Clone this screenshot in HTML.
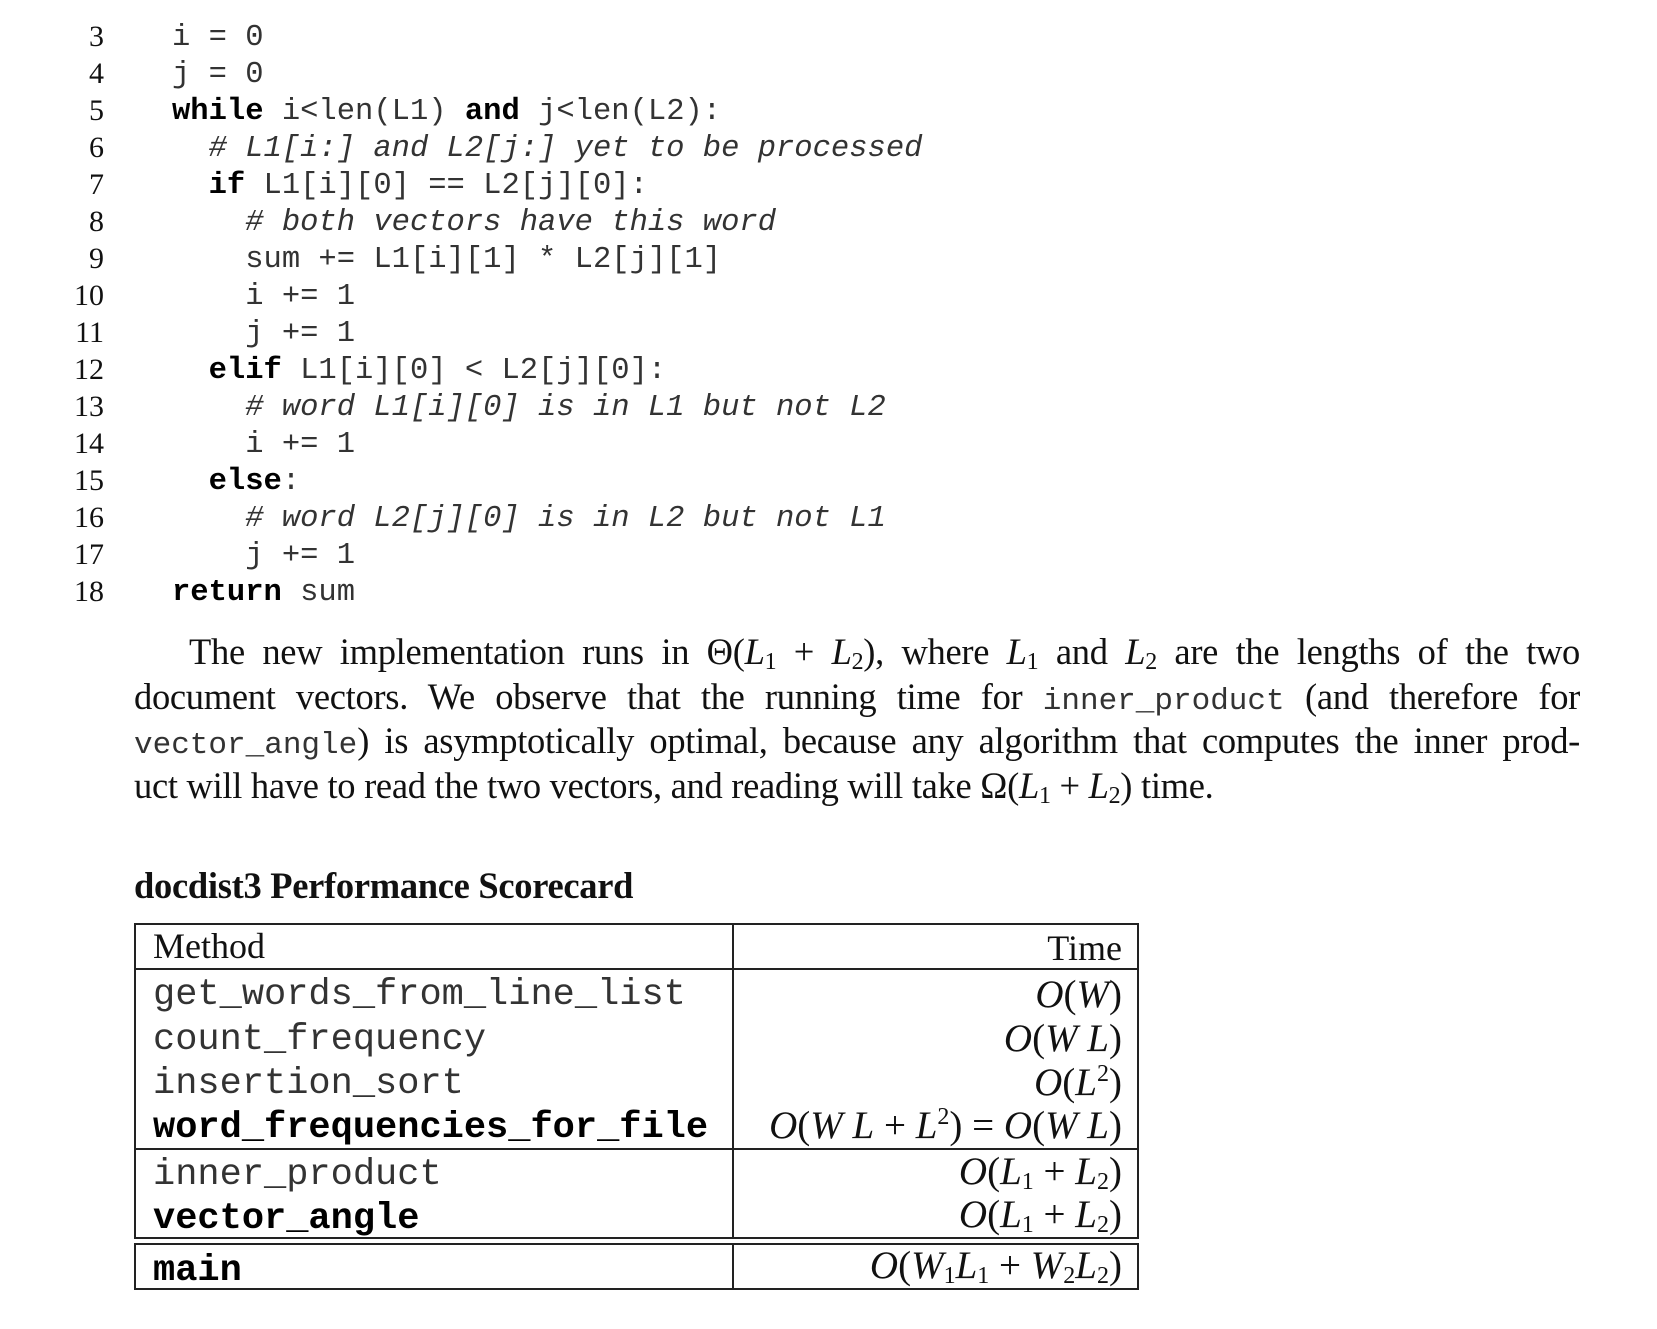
<!DOCTYPE html>
<html><head><meta charset="utf-8"><style>
body{margin:0;width:1657px;height:1329px;background:#fff;position:relative;overflow:hidden;color:#111}
.ln{position:absolute;left:40px;width:64px;text-align:right;font:30px "Liberation Serif",serif}
.cd{position:absolute;left:172px;font:30.5px "Liberation Mono",monospace;white-space:pre;color:#333}
.cd b{font-weight:bold;color:#000}.cd i{font-style:italic}
.p{position:absolute;left:134px;width:1446px;font:36.5px "Liberation Serif",serif;white-space:nowrap;letter-spacing:-0.3px}
.j{text-align:justify;text-align-last:justify;white-space:normal}
.m{font-family:"Liberation Mono",monospace;font-size:31px;color:#333;letter-spacing:0}
i{font-style:italic}
sub{font-size:24px;vertical-align:-5px;line-height:0}
sup{font-size:24px;vertical-align:14px;line-height:0}
.hl{position:absolute;left:134px;width:1005px;height:2px;background:#222}
.vl{position:absolute;left:732px;width:2px;background:#222}
.c{position:absolute;left:153px;font:37px "Liberation Mono",monospace;white-space:pre;line-height:44px;color:#333}
.c.b{font-weight:bold;color:#000}
.t{position:absolute;right:535px;text-align:right;font:39px "Liberation Serif",serif;white-space:nowrap;line-height:40px}
</style></head><body>
<div class="ln" style="top:20px">3</div><div class="cd" style="top:21px">i = 0</div>
<div class="ln" style="top:57px">4</div><div class="cd" style="top:58px">j = 0</div>
<div class="ln" style="top:94px">5</div><div class="cd" style="top:95px"><b>while</b> i&lt;len(L1) <b>and</b> j&lt;len(L2):</div>
<div class="ln" style="top:131px">6</div><div class="cd" style="top:132px"><i>  # L1[i:] and L2[j:] yet to be processed</i></div>
<div class="ln" style="top:168px">7</div><div class="cd" style="top:169px">  <b>if</b> L1[i][0] == L2[j][0]:</div>
<div class="ln" style="top:205px">8</div><div class="cd" style="top:206px"><i>    # both vectors have this word</i></div>
<div class="ln" style="top:242px">9</div><div class="cd" style="top:243px">    sum += L1[i][1] * L2[j][1]</div>
<div class="ln" style="top:279px">10</div><div class="cd" style="top:280px">    i += 1</div>
<div class="ln" style="top:316px">11</div><div class="cd" style="top:317px">    j += 1</div>
<div class="ln" style="top:353px">12</div><div class="cd" style="top:354px">  <b>elif</b> L1[i][0] &lt; L2[j][0]:</div>
<div class="ln" style="top:390px">13</div><div class="cd" style="top:391px"><i>    # word L1[i][0] is in L1 but not L2</i></div>
<div class="ln" style="top:427px">14</div><div class="cd" style="top:428px">    i += 1</div>
<div class="ln" style="top:464px">15</div><div class="cd" style="top:465px">  <b>else</b>:</div>
<div class="ln" style="top:501px">16</div><div class="cd" style="top:502px"><i>    # word L2[j][0] is in L2 but not L1</i></div>
<div class="ln" style="top:538px">17</div><div class="cd" style="top:539px">    j += 1</div>
<div class="ln" style="top:575px">18</div><div class="cd" style="top:576px"><b>return</b> sum</div>

<div class="p j" style="top:630px;left:189px;width:1391px">The new implementation runs in Θ(<i>L</i><sub>1</sub> + <i>L</i><sub>2</sub>), where <i>L</i><sub>1</sub> and <i>L</i><sub>2</sub> are the lengths of the two</div>
<div class="p j" style="top:675px">document vectors. We observe that the running time for <span class="m">inner_product</span> (and therefore for</div>
<div class="p j" style="top:719px"><span class="m">vector_angle</span>) is asymptotically optimal, because any algorithm that computes the inner prod-</div>
<div class="p" style="top:764px">uct will have to read the two vectors, and reading will take Ω(<i>L</i><sub>1</sub> + <i>L</i><sub>2</sub>) time.</div>

<div class="p" style="top:864px;font-weight:bold">docdist3 Performance Scorecard</div>

<div class="hl" style="top:923px"></div>
<div class="hl" style="top:968px"></div>
<div class="hl" style="top:1148px"></div>
<div class="hl" style="top:1237px"></div>
<div class="hl" style="top:1243px"></div>
<div class="hl" style="top:1288px"></div>
<div style="position:absolute;left:134px;top:923px;width:2px;height:316px;background:#222"></div>
<div style="position:absolute;left:1137px;top:923px;width:2px;height:316px;background:#222"></div>
<div style="position:absolute;left:134px;top:1243px;width:2px;height:47px;background:#222"></div>
<div style="position:absolute;left:1137px;top:1243px;width:2px;height:47px;background:#222"></div>
<div class="vl" style="top:923px;height:316px"></div>
<div class="vl" style="top:1243px;height:47px"></div>

<div class="c" style="top:924px;font-family:'Liberation Serif',serif;font-size:36px;color:#111">Method</div>
<div class="t" style="top:928px;font-size:36px">Time</div>
<div class="c" style="top:973px">get_words_from_line_list</div><div class="t" style="top:975px"><i>O</i>(<i>W</i>)</div>
<div class="c" style="top:1018px">count_frequency</div><div class="t" style="top:1019px"><i>O</i>(<i>W L</i>)</div>
<div class="c" style="top:1062px">insertion_sort</div><div class="t" style="top:1063px"><i>O</i>(<i>L</i><sup>2</sup>)</div>
<div class="c b" style="top:1106px">word_frequencies_for_file</div><div class="t" style="top:1106px"><i>O</i>(<i>W L</i> + <i>L</i><sup>2</sup>) = <i>O</i>(<i>W L</i>)</div>
<div class="c" style="top:1153px">inner_product</div><div class="t" style="top:1152px"><i>O</i>(<i>L</i><sub>1</sub> + <i>L</i><sub>2</sub>)</div>
<div class="c b" style="top:1197px">vector_angle</div><div class="t" style="top:1195px"><i>O</i>(<i>L</i><sub>1</sub> + <i>L</i><sub>2</sub>)</div>
<div class="c b" style="top:1249px">main</div><div class="t" style="top:1246px"><i>O</i>(<i>W</i><sub>1</sub><i>L</i><sub>1</sub> + <i>W</i><sub>2</sub><i>L</i><sub>2</sub>)</div>
</body></html>
